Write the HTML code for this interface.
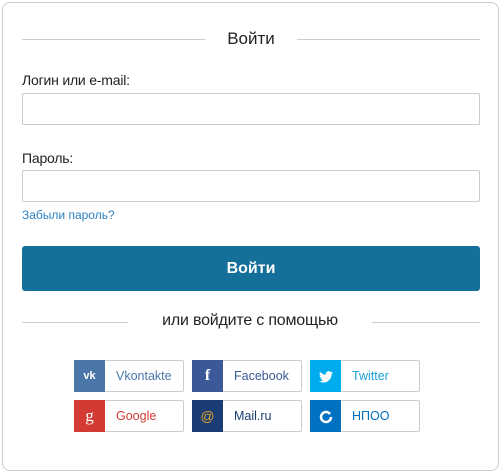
<!DOCTYPE html><html><head><meta charset="utf-8"><style>
*{box-sizing:border-box;margin:0;padding:0}
body{width:502px;height:473px;background:#fff;font-family:"Liberation Sans","Noto Sans CJK SC",sans-serif;position:relative;overflow:hidden}
.card{position:absolute;left:2px;top:2px;width:497px;height:469px;border:1px solid #ccc;border-radius:8px}
.abs{position:absolute}
.line{position:absolute;height:1px;background:#ccc}
.inp{position:absolute;left:22px;width:458px;height:32px;border:1px solid #ccc;border-radius:2px}
.lbl{position:absolute;left:22px;font-size:14px;color:#222;letter-spacing:-0.2px}
.btn{position:absolute;left:22px;top:246px;width:458px;height:45px;background:#156f9b;border-radius:3px;color:#fff;font-weight:bold;font-size:16px;text-align:center;line-height:45px}
.s{position:absolute;width:110px;height:32px;border:1px solid #ccc;border-radius:2px;font-size:12.5px;line-height:30px}
.s .ic{position:absolute;left:-1px;top:-1px;width:31px;height:32px;color:#fff;text-align:center;line-height:32px;font-weight:bold;font-size:14px}
.s span.t{position:absolute;left:41px}
</style></head><body>
<div class="card"></div>
<div class="line" style="left:22px;top:39px;width:183px"></div>
<div class="line" style="left:297px;top:39px;width:183px"></div>
<div class="abs" style="left:205px;width:92px;top:29px;text-align:center;font-size:17px;color:#222">Войти</div>
<div class="lbl" style="top:72px">Логин или e-mail:</div>
<div class="inp" style="top:93px"></div>
<div class="lbl" style="top:150px">Пароль:</div>
<div class="inp" style="top:170px"></div>
<div class="abs" style="left:22px;top:208px;font-size:12px;color:#2d80c0">Забыли пароль?</div>
<div class="btn">Войти</div>
<div class="line" style="left:22px;top:322px;width:106px"></div>
<div class="line" style="left:372px;top:322px;width:108px"></div>
<div class="abs" style="left:128px;width:244px;top:312px;text-align:center;font-size:16px;color:#222;letter-spacing:-0.2px">или войдите с помощью</div>
<div class="s" style="left:74px;top:360px;color:#4a76a8"><div class="ic" style="background:#4a76a8;font-size:11px">vk</div><span class="t">Vkontakte</span></div>
<div class="s" style="left:192px;top:360px;color:#3b5998"><div class="ic" style="background:#3b5998;font-family:'Liberation Serif',serif;font-size:16px">f</div><span class="t">Facebook</span></div>
<div class="s" style="left:310px;top:360px;color:#1da1d8"><div class="ic" style="background:#00aced"><svg width="14" height="12" viewBox="0 0 24 20" style="vertical-align:middle"><path fill="#fff" d="M24 2.4a10 10 0 01-2.8.8A5 5 0 0023.3.5a10 10 0 01-3.1 1.2A4.9 4.9 0 0011.8 6 14 14 0 011.7.9a4.9 4.9 0 001.5 6.6A4.9 4.9 0 011 6.9a4.9 4.9 0 003.9 4.8 5 5 0 01-2.2.1 4.9 4.9 0 004.6 3.4A9.9 9.9 0 010 17.3 14 14 0 007.5 19.5c9.1 0 14-7.5 14-14v-.6A10 10 0 0024 2.4z"/></svg></div><span class="t">Twitter</span></div>
<div class="s" style="left:74px;top:400px;color:#d23a33"><div class="ic" style="background:#d23a33;font-family:'Liberation Serif',serif;font-weight:normal;font-size:17px">g</div><span class="t">Google</span></div>
<div class="s" style="left:192px;top:400px;color:#1a3e73"><div class="ic" style="background:#1a3e73;color:#e0a030;font-weight:normal">@</div><span class="t">Mail.ru</span></div>
<div class="s" style="left:310px;top:400px;color:#0070c0"><div class="ic" style="background:#0070c0"><svg width="14" height="14" viewBox="0 0 14 14" style="vertical-align:middle"><circle cx="7" cy="7" r="5" fill="none" stroke="#fff" stroke-width="2.5" stroke-dasharray="28 3.4"/></svg></div><span class="t">НПОО</span></div>
</body></html>
